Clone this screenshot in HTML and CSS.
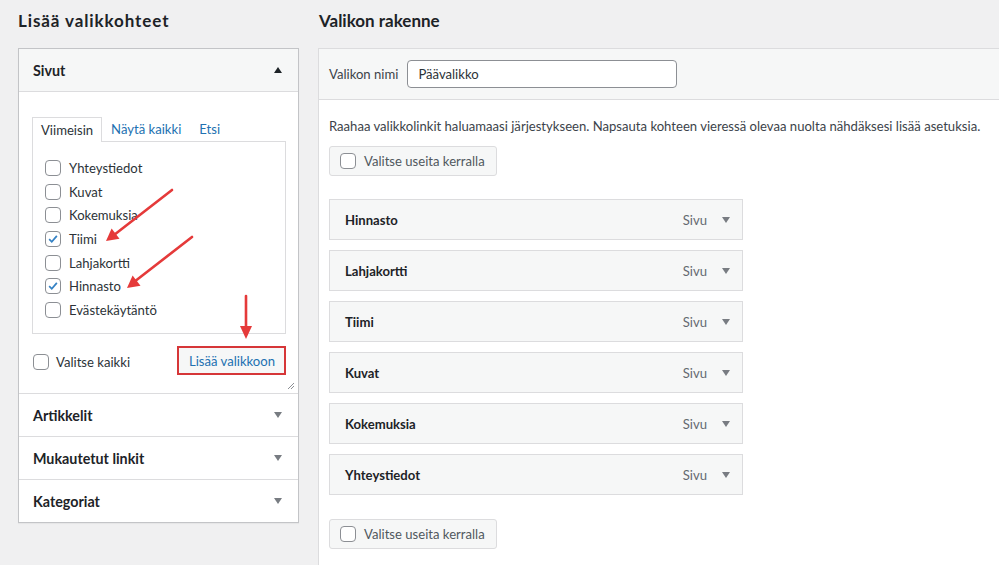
FILE: index.html
```html
<!DOCTYPE html>
<html lang="fi">
<head>
<meta charset="utf-8">
<title>Valikot</title>
<link rel="stylesheet" href="styles.css">
</head>
<body>
<div class="page">
  <section class="col-left">
    <h2 class="col-title wide">Lisää valikkohteet</h2>
    <div class="accordion">
      <div class="acc-section open">
        <div class="acc-head">
          <span>Sivut</span>
          <span class="tri up"></span>
        </div>
        <div class="acc-body">
          <div class="tabs">
            <span class="tab active">Viimeisin</span>
            <span class="tab">Näytä kaikki</span>
            <span class="tab">Etsi</span>
          </div>
          <ul class="checklist">
            <li><span class="cb"></span>Yhteystiedot</li>
            <li><span class="cb"></span>Kuvat</li>
            <li><span class="cb"></span>Kokemuksia</li>
            <li><span class="cb checked"><svg viewBox="0 0 16 16"><path d="M3.6 8.2 L6.6 11.2 L12.4 4.4" fill="none" stroke="#3582c4" stroke-width="2"/></svg></span>Tiimi</li>
            <li><span class="cb"></span>Lahjakortti</li>
            <li><span class="cb checked"><svg viewBox="0 0 16 16"><path d="M3.6 8.2 L6.6 11.2 L12.4 4.4" fill="none" stroke="#3582c4" stroke-width="2"/></svg></span>Hinnasto</li>
            <li><span class="cb"></span>Evästekäytäntö</li>
          </ul>
          <div class="acc-actions">
            <label class="select-all"><span class="cb"></span>Valitse kaikki</label>
            <span class="btn-add">Lisää valikkoon</span>
          </div>
          <svg class="resize" viewBox="0 0 8 8"><path d="M1 7 L7 1 M4 7 L7 4" stroke="#8c8f94" stroke-width="1"/></svg>
        </div>
      </div>
      <div class="acc-section">
        <div class="acc-head"><span>Artikkelit</span><span class="tri down"></span></div>
      </div>
      <div class="acc-section">
        <div class="acc-head"><span>Mukautetut linkit</span><span class="tri down"></span></div>
      </div>
      <div class="acc-section">
        <div class="acc-head"><span>Kategoriat</span><span class="tri down"></span></div>
      </div>
    </div>
  </section>

  <section class="col-right">
    <h2 class="col-title">Valikon rakenne</h2>
    <div class="menu-panel">
      <div class="menu-head">
        <label class="name-label">Valikon nimi</label>
        <span class="name-input">Päävalikko</span>
      </div>
      <div class="menu-body">
        <p class="desc">Raahaa valikkolinkit haluamaasi järjestykseen. Napsauta kohteen vieressä olevaa nuolta nähdäksesi lisää asetuksia.</p>
        <span class="bulk"><span class="cb"></span>Valitse useita kerralla</span>
        <ul class="items">
          <li class="item"><span class="item-title">Hinnasto</span><span class="item-type">Sivu</span><span class="tri down"></span></li>
          <li class="item"><span class="item-title">Lahjakortti</span><span class="item-type">Sivu</span><span class="tri down"></span></li>
          <li class="item"><span class="item-title">Tiimi</span><span class="item-type">Sivu</span><span class="tri down"></span></li>
          <li class="item"><span class="item-title">Kuvat</span><span class="item-type">Sivu</span><span class="tri down"></span></li>
          <li class="item"><span class="item-title">Kokemuksia</span><span class="item-type">Sivu</span><span class="tri down"></span></li>
          <li class="item"><span class="item-title">Yhteystiedot</span><span class="item-type">Sivu</span><span class="tri down"></span></li>
        </ul>
        <span class="bulk"><span class="cb"></span>Valitse useita kerralla</span>
      </div>
    </div>
  </section>

  <svg class="annot" viewBox="0 0 999 565" aria-hidden="true">
    <g stroke="#e53a3a" stroke-width="2.6" stroke-linecap="round">
      <line x1="172" y1="190" x2="114" y2="235"/>
      <line x1="192" y1="237" x2="134" y2="282"/>
      <line x1="246" y1="296" x2="246" y2="329"/>
    </g>
    <g fill="#e53a3a">
      <polygon points="106,241 119.5,238.8 111.6,228.6"/>
      <polygon points="127,288 140.5,285.8 132.6,275.6"/>
      <polygon points="246,339 240,326 252,326"/>
    </g>
  </svg>
</div>
</body>
</html>
```

FILE: styles.css
```css
* { box-sizing: border-box; }

html, body {
  margin: 0;
  padding: 0;
  background: #f0f0f1;
  height: 565px;
  overflow: hidden;
}

body {
  font-family: Lato, "Noto Sans", sans-serif;
  font-size: 13.1px;
  color: #3c434a;
}

.page {
  position: relative;
  display: flex;
  gap: 19px;
  padding-left: 18px;
  height: 565px;
}

.col-title {
  margin: 0;
  height: 48px;
  padding-top: 9px;
  padding-left: 1px;
  font-size: 17px;
  font-weight: 700;
  color: #1d2327;
  line-height: 24px;
}
.col-left .col-title { padding-left: 0; }
.col-title.wide { letter-spacing: 0.9px; }

.col-left { width: 281px; flex: none; }
.col-right { flex: 1; min-width: 0; }

.accordion {
  background: #fff;
  border: 1px solid #c3c4c7;
  box-shadow: 0 1px 1px rgba(0,0,0,.04);
}

.acc-section + .acc-section { border-top: 1px solid #dcdcde; }

.acc-head {
  height: 42px;
  display: flex;
  align-items: center;
  justify-content: space-between;
  padding: 0 16px 0 14px;
  font-size: 14.3px;
  font-weight: 700;
  color: #1d2327;
}

.open .acc-head {
  background: #f6f7f7;
  border-bottom: 1px solid #dcdcde;
  height: 43px;
}

.tri {
  width: 0;
  height: 0;
  border-left: 4.5px solid transparent;
  border-right: 4.5px solid transparent;
}
.tri.up { border-bottom: 6px solid #1d2327; }
.tri.down { border-top: 6px solid #787c82; }

.acc-body {
  position: relative;
  padding: 24px 12px 0 13px;
  height: 301px;
}

.tabs {
  display: flex;
  align-items: flex-end;
  height: 25px;
}

.tab {
  padding: 0 9px;
  line-height: 24px;
  color: #2271b1;
}

.tab.active {
  color: #2c3338;
  border: 1px solid #dcdcde;
  border-bottom: none;
  background: #fff;
  padding: 0 8px;
  margin-right: 0;
  position: relative;
  top: 1px;
}

.checklist {
  list-style: none;
  margin: 0;
  padding: 14px 0 0 12px;
  height: 193px;
  border: 1px solid #dcdcde;
}

.checklist li {
  display: flex;
  align-items: center;
  height: 23.7px;
  color: #2c3338;
}

.cb {
  flex: none;
  width: 16px;
  height: 16px;
  border: 1px solid #8c8f94;
  border-radius: 4px;
  background: #fff;
  margin-right: 8px;
  display: inline-flex;
}
.cb svg { width: 14px; height: 14px; }

.acc-actions {
  display: flex;
  align-items: center;
  justify-content: space-between;
  margin-top: 12px;
  height: 29px;
}

.select-all {
  display: flex;
  align-items: center;
  color: #2c3338;
  margin-left: 1px;
  padding-top: 2px;
}
.select-all .cb { margin-right: 7px; }

.btn-add {
  display: inline-flex;
  align-items: center;
  height: 29px;
  padding: 0 9px 0 10px;
  background: #f6f7f7;
  color: #2271b1;
  border: 2px solid #d63638;
}

.resize {
  position: absolute;
  right: 3px;
  bottom: 3px;
  width: 8px;
  height: 8px;
}

.menu-panel {
  border-left: 1px solid #dcdcde;
  border-top: 1px solid #dcdcde;
  background: #fff;
  height: 517px;
}

.menu-head {
  display: flex;
  align-items: center;
  height: 51px;
  background: #f6f7f7;
  border-bottom: 1px solid #dcdcde;
  padding-left: 10px;
}

.name-label {
  color: #3c434a;
  margin-right: 9px;
}

.name-input {
  display: flex;
  align-items: center;
  width: 270px;
  height: 28px;
  padding: 0 10px;
  border: 1px solid #8c8f94;
  border-radius: 4px;
  background: #fff;
  color: #2c3338;
}

.menu-body {
  padding: 0 10px;
}

.desc {
  margin: 0;
  padding-top: 17px;
  height: 46px;
  line-height: 19px;
  white-space: nowrap;
}

.bulk {
  display: inline-flex;
  align-items: center;
  height: 30px;
  padding: 0 11px 0 10px;
  background: #f6f7f7;
  border: 1px solid #dcdcde;
  border-radius: 3px;
  color: #50575e;
}

.items {
  list-style: none;
  margin: 23px 0 24px;
  padding: 0;
  display: flex;
  flex-direction: column;
  gap: 10px;
}

.item {
  width: 414px;
  height: 41px;
  display: flex;
  align-items: center;
  border: 1px solid #dcdcde;
  background: #f6f7f7;
  padding: 0 12px 0 15px;
}

.item-title {
  flex: 1;
  font-weight: 700;
  color: #1d2327;
}

.item-type {
  color: #646970;
  margin-right: 15px;
}

.annot {
  position: absolute;
  left: 0;
  top: 0;
  width: 999px;
  height: 565px;
  pointer-events: none;
}
```
